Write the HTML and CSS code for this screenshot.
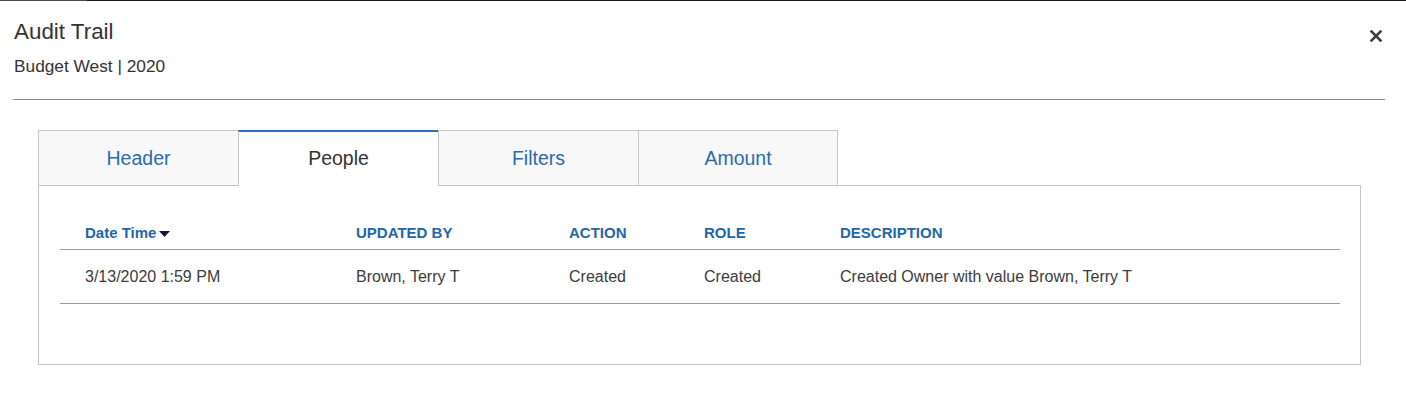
FILE: index.html
```html
<!DOCTYPE html>
<html lang="en">
<head>
<meta charset="utf-8">
<title>Audit Trail</title>
<link rel="stylesheet" href="styles.css">
</head>
<body>
<div class="edge"><span class="edge-left"></span><span class="edge-right"></span></div>
<div class="modal">
  <div class="modal-head">
    <div class="titles">
      <h1 class="title">Audit Trail</h1>
      <div class="subtitle">Budget West | 2020</div>
    </div>
    <button class="close" aria-label="Close">
      <svg width="12" height="12" viewBox="0 0 12 12"><path d="M1.5 1.5 L10.5 10.5 M10.5 1.5 L1.5 10.5" stroke="#3a3f48" stroke-width="2.6" stroke-linecap="square" fill="none"/></svg>
    </button>
  </div>
  <div class="rule"></div>
  <div class="tabs-wrap">
    <div class="tabs">
      <div class="tab">Header</div>
      <div class="tab active">People</div>
      <div class="tab">Filters</div>
      <div class="tab last">Amount</div>
    </div>
    <div class="panel">
      <div class="table">
        <div class="row head">
          <div class="cell">Date Time<svg class="sort" width="11" height="6" viewBox="0 0 11 6"><path d="M0 0 H11 L5.5 6 Z" fill="#16163a"/></svg></div>
          <div class="cell">UPDATED BY</div>
          <div class="cell">ACTION</div>
          <div class="cell">ROLE</div>
          <div class="cell">DESCRIPTION</div>
        </div>
        <div class="row data">
          <div class="cell">3/13/2020 1:59 PM</div>
          <div class="cell">Brown, Terry T</div>
          <div class="cell">Created</div>
          <div class="cell">Created</div>
          <div class="cell">Created Owner with value Brown, Terry T</div>
        </div>
      </div>
    </div>
  </div>
</div>
</body>
</html>
```
FILE: styles.css
```css
* { box-sizing: border-box; }
html, body { margin: 0; padding: 0; background: #fff; }
body {
  font-family: "Liberation Sans", Arial, sans-serif;
  color: #333;
  width: 1406px;
  height: 402px;
  overflow: hidden;
}
.edge { display: flex; height: 1px; }
.edge-left { width: 87px; background: #4a4a4a; }
.edge-right { flex: 1; background: #141414; }

.modal-head {
  display: flex;
  justify-content: space-between;
  align-items: flex-start;
  padding: 18px 0 0 14px;
  margin-right: 21px;
}
.title {
  margin: 0;
  font-size: 22.4px;
  line-height: 26px;
  font-weight: normal;
  color: #333;
}
.subtitle {
  margin-top: 11px;
  font-size: 17.3px;
  line-height: 20px;
  color: #333;
}
.close {
  border: 0;
  background: none;
  padding: 0;
  margin: 11px 3px 0 0;
  width: 12px;
  height: 12px;
  display: flex;
  cursor: pointer;
}
.rule {
  height: 1px;
  background: #8c8c8c;
  margin: 23px 21px 0 13px;
}
.tabs-wrap {
  padding: 30px 0 0 38px;
  width: 1361px;
}
.tabs { display: flex; }
.tab {
  width: 200px;
  height: 55px;
  background: #f8f8f8;
  border-top: 1px solid #c8c8c8;
  border-left: 1px solid #c8c8c8;
  color: #2a6cb0;
  font-size: 19.5px;
  display: flex;
  align-items: center;
  justify-content: center;
}
.tab.last { border-right: 1px solid #c8c8c8; }
.tab.active {
  background: #fff;
  border-top: 2px solid #2a6ebb;
  color: #333;
  height: 56px;
  margin-bottom: -1px;
  padding-bottom: 1px;
  position: relative;
  z-index: 1;
}
.panel {
  border: 1px solid #c4c4c4;
  height: 180px;
  padding: 31px 20px 0 21px;
}
.table { display: flex; flex-direction: column; }
.row {
  display: grid;
  grid-template-columns: 271px 213px 135px 136px 1fr;
  border-bottom: 1px solid #9c9c9c;
}
.cell { padding-left: 25px; white-space: nowrap; }
.row.head .cell {
  height: 32px;
  line-height: 32px;
  font-size: 15px;
  font-weight: bold;
  color: #1f67aa;
}
.sort { margin-left: 3px; vertical-align: 1px; }
.row.data .cell {
  height: 53px;
  line-height: 54px;
  font-size: 16px;
  color: #3c3c3c;
}
```
